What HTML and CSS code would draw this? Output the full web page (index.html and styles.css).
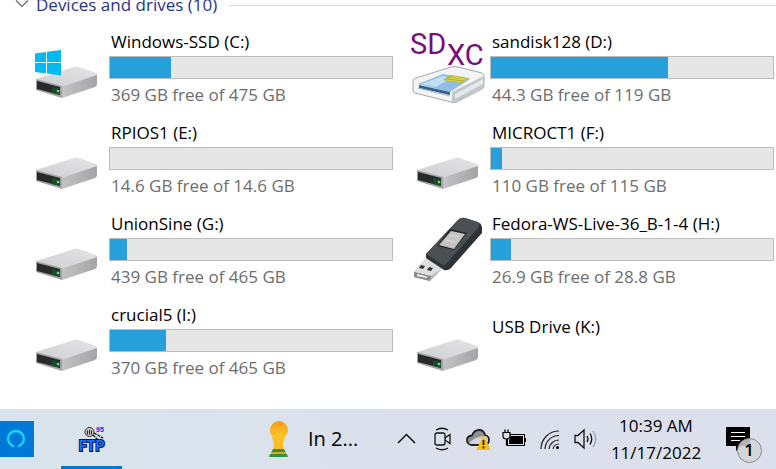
FILE: index.html
```html
<!DOCTYPE html>
<html lang="en">
<head>
    <meta charset="UTF-8">
    <meta name="viewport" content="width=device-width, initial-scale=1.0">
    <title>This PC</title>
    <link rel="stylesheet" href="styles.css">
</head>
<body>
    <!-- shared drive icon -->
    <svg class="defs" width="0" height="0">
        <defs>
            <linearGradient id="driveTop" x1="0" y1="1" x2="1" y2="0">
                <stop offset="0" stop-color="#cfcfd2"/>
                <stop offset="1" stop-color="#e4e4e6"/>
            </linearGradient>
            <linearGradient id="driveSide" x1="0" y1="0" x2="1" y2="0">
                <stop offset="0" stop-color="#c4c4c7"/>
                <stop offset="1" stop-color="#a4a4a8"/>
            </linearGradient>
            <symbol id="drive" viewBox="0 0 76 77">
                <path d="M8 49 L46 37 Q48 36 51 37 L68 43 Q70 44 69 46 L34 57 Z" fill="url(#driveTop)"/>
                <path d="M33 57 L69 45 V54 Q69 56 67 57 L34 68 Z" fill="url(#driveSide)"/>
                <path d="M8 49 L34 56 V68 L8 60 Z" fill="#a2a2a5"/>
                <path d="M9 51 L32 57 V65 L9 59 Z" fill="#262a2a"/>
                <path d="M24 57 L32 59 V65 L24 63 Z" fill="#1d4a29"/>
                <circle cx="30" cy="61" r="1.3" fill="#5fe27c"/>
            </symbol>
        </defs>
    </svg>

    <main class="explorer">
        <div class="group-header">
            <svg class="arrow" width="16" height="16" viewBox="0 0 16 16"><path d="M2 3.500 L8 9.500 L14 3.500" fill="none" stroke="#666" stroke-width="1.200"/></svg>
            <h2>Devices and drives (10)</h2>
            <span class="rule"></span>
        </div>

        <div class="drives">
            <div class="drive">
                <svg class="icon" viewBox="0 0 76 77">
                    <use href="#drive"/>
                    <path d="M7 23.500 L18 22 V32 H7 Z M19 21.800 L33 20 V32 H19 Z M7 33 H18 V43.500 L7 42 Z M19 33 H33 V45.500 L19 43.600 Z" fill="#00b9f1"/>
                </svg>
                <div class="info">
                    <div class="name">Windows-SSD (C:)</div>
                    <progress max="100" value="21.7" aria-label="Space used on C:"></progress>
                    <div class="space">369 GB free of 475 GB</div>
                </div>
            </div>

            <div class="drive">
                <svg class="icon" viewBox="0 0 76 77">
                    <path d="M4 51 Q4 49 7 48 L42 37 Q45 36 49 37 L73 43 Q75 44 75 46 V56 Q75 58 73 59 L48 72 Q45 73 42 72 L6 63 Q4 62 4 60 Z" fill="#f3f4f6" stroke="#8f9296" stroke-width=".8"/>
                    <path d="M43 62 L75 46 V56 Q75 58 73 59 L48 72 Q45 73 43 72 Z" fill="#c3c6ca"/>
                    <path d="M46 64 L74 49 V54 L46 69 Z" fill="#e6e8ea"/>
                    <path d="M9 54 L34 44 L61 49 L41 62 Z" fill="#8fbde3"/>
                    <path d="M12 54 L34 46 L42 48 L27 57 Z" fill="#c3ddf3"/>
                    <path d="M34 50 L42 45 L60 48 L53 53 Z" fill="#b9b52c"/>
                    <path d="M38 50 L53 52 M40 48 L56 50 M42 46.500 L58 49" stroke="#e4dd62" stroke-width=".8"/>
                    <path d="M10 55 L41 62 V65 L10 58 Z" fill="#315f93"/>
                    <path d="M9 58 L41 66" stroke="#a9adb1"/>
                    <text class="sd" x="1" y="24">SD</text>
                    <text class="sd" x="38" y="35">XC</text>
                </svg>
                <div class="info">
                    <div class="name">sandisk128 (D:)</div>
                    <progress max="100" value="62.7" aria-label="Space used on D:"></progress>
                    <div class="space">44.3 GB free of 119 GB</div>
                </div>
            </div>

            <div class="drive">
                <svg class="icon" viewBox="0 0 76 77"><use href="#drive"/></svg>
                <div class="info">
                    <div class="name">RPIOS1 (E:)</div>
                    <progress max="100" value="0" aria-label="Space used on E:"></progress>
                    <div class="space">14.6 GB free of 14.6 GB</div>
                </div>
            </div>

            <div class="drive">
                <svg class="icon" viewBox="0 0 76 77"><use href="#drive"/></svg>
                <div class="info">
                    <div class="name">MICROCT1 (F:)</div>
                    <progress max="100" value="4" aria-label="Space used on F:"></progress>
                    <div class="space">110 GB free of 115 GB</div>
                </div>
            </div>

            <div class="drive">
                <svg class="icon" viewBox="0 0 76 77"><use href="#drive"/></svg>
                <div class="info">
                    <div class="name">UnionSine (G:)</div>
                    <progress max="100" value="6" aria-label="Space used on G:"></progress>
                    <div class="space">439 GB free of 465 GB</div>
                </div>
            </div>

            <div class="drive">
                <svg class="icon" viewBox="0 0 76 77">
                    <path d="M5 60 L17 46 L33 57 L21 69 L5 65 Z" fill="#b4b4b4"/>
                    <path d="M5 60 L17 46 L33 57 L22 64 Z" fill="#dedede"/>
                    <path d="M5 60 L22 64 L21 69 L5 65 Z" fill="#8b8b8b"/>
                    <path d="M8 62 L18 64.500 V66 L8 64 Z" fill="#f4f4f4"/>
                    <path d="M12 53 l4 1 l-2 3 l-4 -1 Z M20 55 l4 1 l-2 3 l-4 -1 Z" fill="#333"/>
                    <path d="M17 42 L49 8 Q52 5 56 6 L69 10 Q73 12 73 16 V21 L42 56 Q39 59 35 58 L17 46 Z" fill="#2d3235"/>
                    <path d="M17 42 L49 8 Q52 5 56 6 L68 10 Q72 12 69 16 L37 52 Q35 54 32 52 Z" fill="#4a5054"/>
                    <path d="M41 17 L58 21 L45 38 L28 34 Z" fill="#24282a"/>
                    <path d="M42 19 L56 22 L45 37 L30 33 Z" fill="#c2c3c2"/>
                    <path d="M40 23 L50 25 M36 28 L46 30" stroke="#d2d2d0" stroke-width="2"/>
                </svg>
                <div class="info">
                    <div class="name">Fedora-WS-Live-36_B-1-4 (H:)</div>
                    <progress max="100" value="7" aria-label="Space used on H:"></progress>
                    <div class="space">26.9 GB free of 28.8 GB</div>
                </div>
            </div>

            <div class="drive">
                <svg class="icon" viewBox="0 0 76 77"><use href="#drive"/></svg>
                <div class="info">
                    <div class="name">crucial5 (I:)</div>
                    <progress max="100" value="20" aria-label="Space used on I:"></progress>
                    <div class="space">370 GB free of 465 GB</div>
                </div>
            </div>

            <div class="drive no-media">
                <svg class="icon" viewBox="0 0 76 77"><use href="#drive"/></svg>
                <div class="info">
                    <div class="name">USB Drive (K:)</div>
                </div>
            </div>
        </div>
    </main>

    <footer class="taskbar">
        <button class="app alexa" aria-label="Alexa">
            <svg width="20" height="20" viewBox="0 0 20 20"><path d="M8 17.300 A7.800 7.800 0 1 1 12 17.300" fill="none" stroke="#1bd3f9" stroke-width="2.400"/></svg>
        </button>
        <button class="app active" aria-label="FTP 95">
            <svg width="28" height="28" viewBox="0 0 28 28">
                <path d="M14 9 L20 14 L24 13 L26 16 V20 L22 18 Z" fill="#b9bcc0"/>
                <path d="M16 8 L25 13 M15 10 L25 20" stroke="#111" stroke-width="1.400" stroke-dasharray="3 1"/>
                <circle cx="11.500" cy="7" r="4.500" fill="#c9c5be" stroke="#333"/>
                <path d="M9.500 9.500 V5.500 M11.500 9.500 V5 M13.500 9.500 V5.500" stroke="#222"/>
                <text class="ftp-95" x="18" y="7">95</text>
                <text class="ftp" x="1" y="26">FTP</text>
            </svg>
        </button>

        <button class="news">
            <svg width="24" height="40" viewBox="0 0 24 40">
                <defs>
                    <linearGradient id="cup" x1="0" y1="0" x2="0" y2="1">
                        <stop offset="0" stop-color="#f99c14"/>
                        <stop offset="1" stop-color="#fdcb2e"/>
                    </linearGradient>
                </defs>
                <path d="M4 12 Q5 15 6 18 Q9 25 7 31 H18 Q16 25 19 18 Q20 15 22 12 Z" fill="#fcbd26"/>
                <circle cx="13" cy="11" r="9" fill="url(#cup)"/>
                <path d="M7 30 H18 L20 34 H5 Z" fill="#2d9447"/>
                <path d="M5 33 H20 V35 H5 Z" fill="#e7a41e"/>
                <path d="M4 35 H21 L22 38 H3 Z" fill="#2d9447"/>
            </svg>
            <span>In 2...</span>
        </button>

        <button class="tray" aria-label="Show hidden icons">
            <svg width="24" height="24" viewBox="0 0 24 24"><path d="M4 16 L12.500 7.500 L21 16" fill="none" stroke="#111" stroke-width="1.500"/></svg>
        </button>
        <button class="tray" aria-label="Camera">
            <svg width="24" height="24" viewBox="0 0 24 24" fill="none" stroke="#111" stroke-width="1.300">
                <rect x="5" y="6" width="10" height="12" rx="2"/>
                <path d="M15 11 L20 7.500 V16.500 L15 13 M6 3 Q12 -.5 18 3 M6 21 Q12 24.500 18 21"/>
            </svg>
        </button>
        <button class="tray" aria-label="OneDrive">
            <svg width="24" height="24" viewBox="0 0 24 24">
                <path d="M5.500 18 Q1 17 1 13 Q1 9 6 8.500 Q8 3 13 3 Q18 3 19 8 Q23 9 23 13 Q23 17 19 18 Z" fill="#8f9092" stroke="#222" stroke-width="1.800"/>
                <path d="M5 17 Q2 16 4 15 Q9 10 18 9 Q22 9 22 13 Q22 17 18 17 Z" fill="#d3d5da"/>
                <path d="M17.500 9 L24 22.500 H11 Z" fill="#fcbc12" stroke="#fcbc12"/>
                <path d="M17.500 13 V18 M17.500 19.500 V21.500" stroke="#222" stroke-width="1.800"/>
            </svg>
        </button>
        <button class="tray" aria-label="Battery">
            <svg width="24" height="24" viewBox="0 0 24 24">
                <rect x="5.500" y="7.500" width="17" height="11" fill="none" stroke="#000"/>
                <path d="M8 9 H21 V17 H7 V14 Z M23 11 H24 V15 H23 Z" fill="#000"/>
                <path d="M1 5.500 H8 V9 Q8 12 4.500 12 Q1 12 1 9 Z" fill="#dbe1ec" stroke="#000" stroke-width="1.200"/>
                <path d="M3 2.500 V5.500 M6 2.500 V5.500 M4.500 12 V18.500" stroke="#000" stroke-width="1.300"/>
            </svg>
        </button>
        <button class="tray" aria-label="Wi-Fi">
            <svg width="24" height="24" viewBox="0 0 24 24" fill="none" stroke="#222" stroke-width="1.200">
                <path d="M3 22 A18 18 0 0 1 21 4 M7 22 A14 14 0 0 1 21 8.500 M11 22 A10 10 0 0 1 21 13 M15 22 A6 6 0 0 1 21 17"/>
                <circle cx="19.500" cy="20.500" r="1.500" fill="#000" stroke="none"/>
            </svg>
        </button>
        <button class="tray" aria-label="Volume">
            <svg width="24" height="24" viewBox="0 0 24 24" fill="none" stroke="#111" stroke-width="1.300">
                <path d="M1 8.500 H4 L10 3 V21 L4 15.500 H1 Z M13 9 Q15 12 13 15 M16 6.500 Q19.500 12 16 17.500"/>
                <path d="M19 4 Q24.500 12 19 20" stroke="#9a9fa8"/>
            </svg>
        </button>

        <button class="clock">
            <span>10:39 AM</span>
            <span>11/17/2022</span>
        </button>

        <button class="notifications" aria-label="1 new notification">
            <svg width="40" height="48" viewBox="0 0 40 48">
                <path d="M4 12 H28 V31 H19 L14 36 V31 H4 Z" fill="#000"/>
                <path d="M9 17.500 H23 M9 21.500 H23 M9 25.500 H18" stroke="#fff"/>
                <circle cx="27.500" cy="35.500" r="12" fill="#d2d3d6" fill-opacity=".85" stroke="#8b8b8e"/>
                <text class="count" x="27" y="41">1</text>
            </svg>
        </button>
    </footer>
</body>
</html>
```
FILE: styles.css
```css
* {
    margin: 0;
    padding: 0;
    box-sizing: border-box;
}
body {
    display: flex;
    flex-direction: column;
    height: 100vh;
    overflow: hidden;
    font-family: "Open Sans", "Noto Sans", sans-serif;
    font-size: 17px;
    line-height: 24px;
    color: #000;
    background: #fff;
}
button {
    border: none;
    background: none;
    font: inherit;
    color: inherit;
}
.defs {
    position: absolute;
}

/* file list, scrolled a little past the group header */
.explorer {
    flex: 1;
    min-height: 0;
    overflow: hidden;
}
.group-header {
    display: flex;
    align-items: center;
    margin-top: -7px;
    padding-left: 14px;
}
.group-header h2 {
    margin: 0 12px 0 6px;
    font-size: 17px;
    font-weight: normal;
    color: #25338c;
}
.rule {
    flex: 1;
    height: 1px;
    background: #dedede;
}
.drives {
    display: grid;
    grid-template-columns: 1fr 1fr;
    gap: 14px 16px;
    padding: 13px 2px 0 28px;
}
.drive {
    display: flex;
    gap: 5px;
}
.icon {
    flex: none;
    width: 76px;
    height: 77px;
}
.info {
    flex: 1;
    min-width: 0;
}
.name, .space {
    padding-left: 2px;
    white-space: nowrap;
}
.space {
    color: #6d6d6d;
}
.no-media .info {
    padding-top: 12px;
}
progress {
    display: block;
    width: 100%;
    height: 23px;
    margin: 2px 0 4px;
    appearance: none;
    border: 1px solid #bcbcbc;
    background: #e6e6e6;
}
progress::-webkit-progress-bar {
    background: #e6e6e6;
}
progress::-webkit-progress-value {
    background: #26a0da;
}
.sd {
    font-family: Roboto, "Liberation Sans", sans-serif;
    font-size: 29px;
    fill: #7b0a7b;
}

/* taskbar */
.taskbar {
    display: flex;
    align-items: center;
    flex: none;
    height: 60px;
    background: linear-gradient(to right, #d8e4ed, #dbe1ec 50%, #dbe0ec);
}
.app {
    display: flex;
    align-items: center;
    justify-content: center;
}
.alexa {
    width: 34px;
    height: 36px;
    padding-right: 2px;
    background: #0078d7;
}
.active {
    width: 61px;
    height: 60px;
    margin-left: 27px;
    border-top: 3px solid transparent;
    border-bottom: 3px solid #0078d7;
}
.ftp {
    font-family: Roboto, "Liberation Sans", sans-serif;
    font-size: 14px;
    font-weight: bold;
    fill: #1470ee;
    stroke: #06106e;
    stroke-width: 2px;
    paint-order: stroke;
}
.ftp-95 {
    font-family: "Liberation Sans", sans-serif;
    font-size: 7px;
    font-weight: bold;
    fill: #2222e0;
}
.news {
    display: flex;
    align-items: center;
    gap: 18px;
    width: 132px;
    height: 60px;
    margin-left: auto;
    padding-left: 10px;
    font-size: 20px;
}
.tray {
    display: flex;
    align-items: center;
    justify-content: center;
    width: 36px;
    height: 60px;
}
.clock {
    width: 104px;
    height: 60px;
    font-size: 17px;
    line-height: 27px;
}
.clock span {
    display: block;
}
.notifications {
    display: flex;
    align-items: center;
    justify-content: center;
    width: 68px;
    height: 60px;
}
.count {
    font-size: 17px;
    font-weight: 600;
    text-anchor: middle;
}
```
